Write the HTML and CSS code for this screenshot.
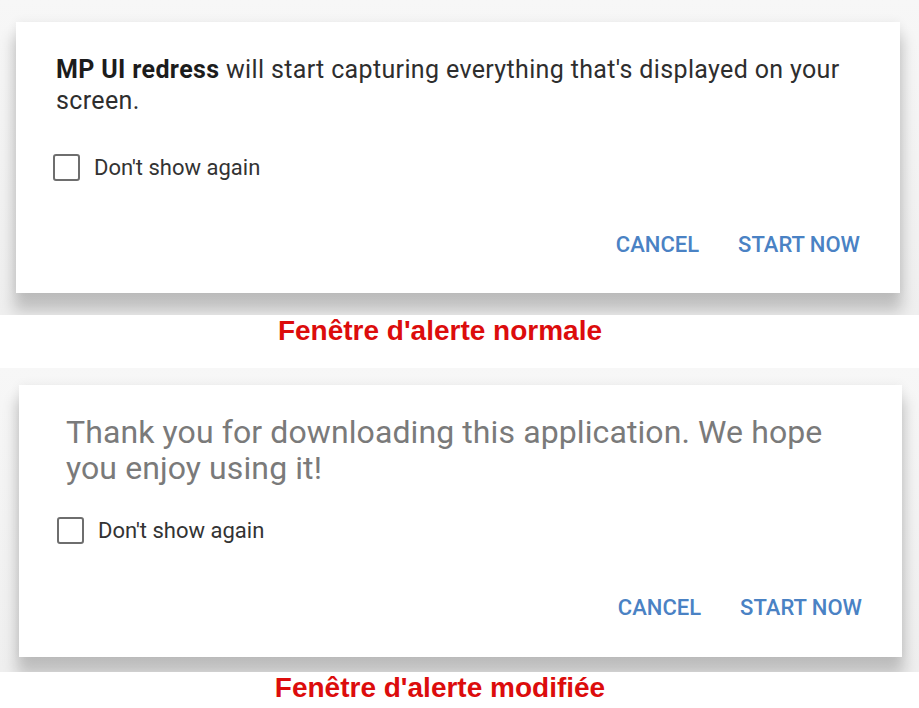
FILE: index.html
```html
<!DOCTYPE html>
<html lang="en">

<head>
    <meta charset="UTF-8">
    <meta name="viewport" content="width=device-width, initial-scale=1.0">
    <title>Fenêtres d'alerte</title>
    <link rel="stylesheet" href="styles.css">
</head>

<body>

    <main class="page">

        <div class="shot shot-normal">
            <div class="dialog">
                <p class="message"><strong>MP UI redress</strong> will start capturing everything that's displayed on your screen.</p>
                <label class="check">
                    <span class="box"></span>
                    <span>Don't show again</span>
                </label>
                <div class="actions">
                    <button type="button">Cancel</button>
                    <button type="button">Start now</button>
                </div>
            </div>
        </div>
        <p class="caption">Fenêtre d'alerte normale</p>

        <div class="shot shot-modified">
            <div class="dialog">
                <p class="message">Thank you for downloading this application. We hope you enjoy using it!</p>
                <label class="check">
                    <span class="box"></span>
                    <span>Don't show again</span>
                </label>
                <div class="actions">
                    <button type="button">Cancel</button>
                    <button type="button">Start now</button>
                </div>
            </div>
        </div>
        <p class="caption">Fenêtre d'alerte modifiée</p>

    </main>

</body>

</html>
```

FILE: styles.css
```css
body {
    margin: 0;
    padding: 0;
    background-color: #fff;
    font-family: Roboto, 'Liberation Sans', sans-serif;
    color: #333;
}

.page {
    display: flex;
    flex-direction: column;
}

/* grey screenshot area around each dialog */
.shot {
    overflow: hidden;
    background: linear-gradient(#f7f7f7, #efefef);
}

.shot-normal {
    padding: 22px 19px 22px 16px;
}

.shot-modified {
    padding: 17px 17px 15px 19px;
}

.dialog {
    display: flex;
    flex-direction: column;
    box-sizing: border-box;
    background-color: #fff;
    box-shadow: 0 16px 14px 2px rgba(0, 0, 0, 0.2), 0 0 10px rgba(0, 0, 0, 0.06);
}

.shot-normal .dialog {
    height: 271px;
    padding: 32px 40px 28px 37px;
}

.shot-modified .dialog {
    height: 272px;
    padding: 29px 40px 29px 38px;
}

.message {
    margin: 0;
    font-size: 25px;
    line-height: 31px;
    letter-spacing: 0.35px;
    color: #2e2e2e;
}

.message strong {
    font-weight: 700;
    color: #1c1c1c;
}

.shot-normal .message {
    padding-left: 3px;
}

.shot-modified .message {
    max-width: 770px;
    padding-left: 9px;
    font-size: 32px;
    line-height: 36px;
    letter-spacing: 0.1px;
    color: #7a7a7a;
}

.check {
    display: flex;
    align-items: center;
    gap: 14px;
    margin-top: 38px;
    font-size: 22px;
    color: #333;
}

.shot-modified .check {
    margin-top: 31px;
}

.box {
    width: 23px;
    height: 23px;
    border: 2px solid #6e6e6e;
    border-radius: 3px;
}

.actions {
    display: flex;
    justify-content: flex-end;
    gap: 39px;
    margin-top: auto;
}

.actions button {
    padding: 0;
    border: none;
    background: none;
    font-family: Roboto, 'Liberation Sans', sans-serif;
    font-size: 22px;
    font-weight: 500;
    line-height: 40px;
    text-transform: uppercase;
    color: #4a82c4;
    cursor: pointer;
}

.caption {
    margin: 0 0 21px;
    padding-right: 39px;
    text-align: center;
    font-family: 'Liberation Sans', Arial, sans-serif;
    font-size: 28px;
    font-weight: bold;
    line-height: 32px;
    color: #dc0c0c;
}

.caption:last-child {
    margin-bottom: 0;
}
```
